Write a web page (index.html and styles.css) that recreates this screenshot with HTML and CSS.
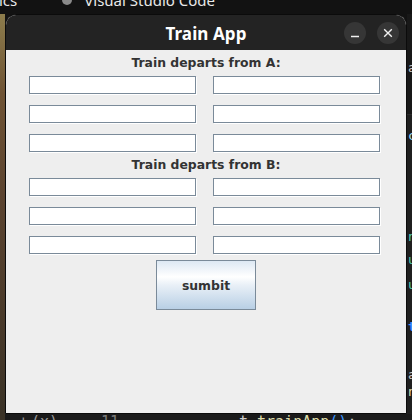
FILE: index.html
```html
<!DOCTYPE html>
<html>
<head>
<meta charset="utf-8">
<link rel="stylesheet" href="styles.css">
</head>
<body>
<div class="topbar">
  <span class="top-text top-left">ics</span>
  <span class="vs-icon"></span>
  <span class="top-text top-vs">Visual Studio Code</span>
</div>
<div class="middle">
  <div class="wallpaper"></div>
  <div class="window">
    <div class="titlebar">
      <div class="title">Train App</div>
      <div class="wbtns">
        <div class="wbtn">
          <svg width="22" height="22" viewBox="0 0 22 22"><path d="M7 14.5h8" stroke="#f0f0f0" stroke-width="1.4"/></svg>
        </div>
        <div class="wbtn">
          <svg width="22" height="22" viewBox="0 0 22 22"><path d="M7.2 7.2l7.6 7.6M14.8 7.2l-7.6 7.6" stroke="#f0f0f0" stroke-width="1.4"/></svg>
        </div>
      </div>
    </div>
    <div class="content">
      <div class="section-label">Train departs from A:</div>
      <div class="fields">
        <div class="field"></div><div class="field"></div>
        <div class="field"></div><div class="field"></div>
        <div class="field"></div><div class="field"></div>
      </div>
      <div class="section-label">Train departs from B:</div>
      <div class="fields">
        <div class="field"></div><div class="field"></div>
        <div class="field"></div><div class="field"></div>
        <div class="field"></div><div class="field"></div>
      </div>
      <div class="btn-row"><button class="submit">sumbit</button></div>
    </div>
  </div>
  <div class="editor-strip">
    <div class="ed-dark"><span class="ed-line l1">a</span></div>
    <div class="ed-body">
      <span class="ed-line l2">c</span>
      <span class="ed-line l3">n</span>
      <span class="ed-line l4">u</span>
      <span class="ed-line l5">u</span>
      <span class="ed-line l6">t</span>
      <span class="ed-line l7">a</span>
      <span class="ed-line l8">n</span>
    </div>
  </div>
</div>
<div class="bottom-strip">
  <span class="b1">⊢(x)</span>
  <span class="b2">11</span>
  <span class="b3"><span class="kw">t</span> <span class="fn">trainApp</span><span class="par">()</span>;</span>
</div>
</body>
</html>
```

FILE: styles.css
```css
* { box-sizing: border-box; }
html, body {
  margin: 0;
  padding: 0;
  width: 412px;
  height: 420px;
  overflow: hidden;
  background: #121212;
}

.topbar {
  height: 14px;
  background: #121212;
  display: flex;
  align-items: flex-start;
  overflow: hidden;
  font-family: "Noto Sans", "DejaVu Sans", sans-serif;
}
.top-text {
  color: #e8e8e8;
  font-size: 15px;
  line-height: 15px;
  margin-top: -7px;
  white-space: nowrap;
}
.top-left { margin-left: -1px; }
.vs-icon {
  width: 10px;
  height: 5px;
  background: #8a8a8a;
  border-radius: 0 0 5px 5px;
  margin-left: 45px;
}
.top-vs { margin-left: 12px; }

.middle {
  display: flex;
  height: 400px;
}
.wallpaper {
  width: 5px;
  background: linear-gradient(#8d7d4c 0%, #6f5334 20%, #5c4430 45%, #4a3a2a 75%, #3a3226 100%);
}
.window {
  width: 402px;
  display: flex;
  flex-direction: column;
  border: 1px solid #0b0b0b;
  border-radius: 11px 11px 0 0;
  overflow: hidden;
  background: #eeeeee;
}
.titlebar {
  height: 35px;
  background: #232323;
  display: flex;
  align-items: center;
  justify-content: center;
  position: relative;
  flex: none;
}
.title {
  color: #ffffff;
  font-family: "Noto Sans", "Open Sans", sans-serif;
  font-weight: 700;
  font-size: 17px;
  letter-spacing: 0.1px;
  margin-top: 1px;
}
.wbtns {
  position: absolute;
  right: 7px;
  top: 7px;
  display: flex;
  gap: 11px;
}
.wbtn {
  width: 22px;
  height: 22px;
  border-radius: 50%;
  background: #363636;
}
.wbtn svg { display: block; }

.content {
  flex: 1;
  background: #eeeeee;
  padding: 0 25px 0 23px;
  font-family: "DejaVu Sans", sans-serif;
  color: #333333;
}
.section-label {
  height: 26px;
  padding-top: 6px;
  font-size: 12.4px;
  font-weight: 700;
  line-height: 14px;
  text-align: center;
  padding-left: 2px;
}
.fields {
  display: grid;
  grid-template-columns: 167px 167px;
  column-gap: 17px;
  row-gap: 11px;
}
.field {
  height: 18px;
  background: #ffffff;
  border: 1px solid #7a8a99;
  box-shadow: 1px 1px 0 #ffffff;
}
.btn-row {
  display: flex;
  justify-content: center;
  padding-top: 6px;
  padding-left: 2px;
}
.submit {
  width: 100px;
  height: 50px;
  border: 1px solid #7a8a99;
  border-radius: 0;
  background: linear-gradient(#dde8f3 0%, #ffffff 33%, #e9f0f7 50%, #b8cfe5 100%);
  font-family: "DejaVu Sans", sans-serif;
  font-weight: 700;
  font-size: 12.4px;
  color: #333333;
  padding: 0;
}

.editor-strip {
  width: 5px;
  display: flex;
  flex-direction: column;
  overflow: hidden;
  font-family: "DejaVu Sans Mono", monospace;
  font-size: 13px;
}
.ed-dark {
  height: 101px;
  background: #181818;
  border-bottom: 1px solid #2b2b2b;
  position: relative;
}
.ed-body {
  flex: 1;
  background: #1f1f1f;
  position: relative;
}
.ed-line {
  position: absolute;
  left: 1px;
  line-height: 13px;
}
.l1 { top: 47px; color: #cccccc; }
.l2 { top: 14px; color: #9cdcfe; }
.l3 { top: 115px; color: #4ec9b0; }
.l4 { top: 138px; color: #4ec9b0; }
.l5 { top: 163px; color: #4ec9b0; }
.l6 { top: 205px; color: #3794ff; font-weight: 700; }
.l7 { top: 253px; color: #cccccc; }
.l8 { top: 270px; color: #dcdcaa; }

.bottom-strip {
  height: 6px;
  background: #1a1a1a;
  overflow: hidden;
  font-family: "DejaVu Sans Mono", monospace;
  font-size: 15px;
  line-height: 15px;
  white-space: nowrap;
  position: relative;
  border-left: 5px solid #3a3226;
}
.bottom-strip span { position: absolute; top: 1px; }
.b1 { left: 17px; color: #9a9a9a; }
.b2 { left: 96px; color: #7a7a7a; }
.b3 { left: 234px; color: #cccccc; }
.kw { color: #cccccc; position: static !important; }
.fn { color: #dcdcaa; position: static !important; }
.par { color: #3794ff; position: static !important; }
```
